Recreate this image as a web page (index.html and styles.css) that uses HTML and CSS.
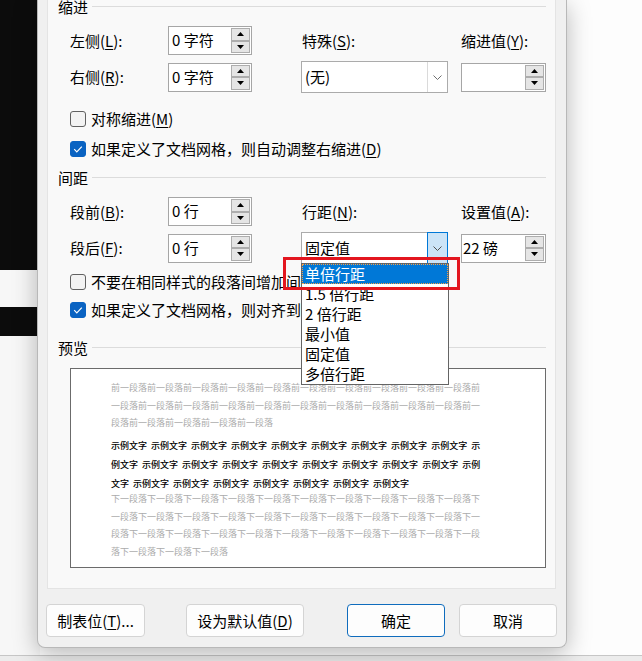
FILE: index.html
```html
<!DOCTYPE html>
<html lang="zh-CN">
<head>
<meta charset="utf-8">
<title>段落</title>
<link rel="stylesheet" href="styles.css">
</head>
<body>
<div class="desktop">
  <div class="dialog">
    <div class="panel">
      <div class="section-head"><span>缩进</span><i class="rule"></i></div>
      <div class="grid">
        <span class="lbl c1">左侧(<u>L</u>):</span>
        <div class="spinner c2"><span class="spin-val">0 字符</span><span class="spin-btns"><span class="sb"><svg width="7" height="4" viewBox="0 0 7 4"><path d="M0 4H7L3.5 0Z"/></svg></span><span class="sb"><svg width="7" height="4" viewBox="0 0 7 4"><path d="M0 0H7L3.5 4Z"/></svg></span></span></div>
        <span class="lbl c4 pl1">特殊(<u>S</u>):</span>
        <span class="lbl c6">缩进值(<u>Y</u>):</span>
        <span class="lbl c1">右侧(<u>R</u>):</span>
        <div class="spinner c2"><span class="spin-val">0 字符</span><span class="spin-btns"><span class="sb"><svg width="7" height="4" viewBox="0 0 7 4"><path d="M0 4H7L3.5 0Z"/></svg></span><span class="sb"><svg width="7" height="4" viewBox="0 0 7 4"><path d="M0 0H7L3.5 4Z"/></svg></span></span></div>
        <div class="select c4"><span class="sel-val">(无)</span><span class="sel-btn"><svg width="9" height="5" viewBox="0 0 9 5"><path d="M0.5 0.5L4.5 4.5L8.5 0.5" fill="none" stroke="#6f6f6f"/></svg></span></div>
        <div class="spinner c6"><span class="spin-val"></span><span class="spin-btns"><span class="sb"><svg width="7" height="4" viewBox="0 0 7 4"><path d="M0 4H7L3.5 0Z"/></svg></span><span class="sb"><svg width="7" height="4" viewBox="0 0 7 4"><path d="M0 0H7L3.5 4Z"/></svg></span></span></div>
      </div>
      <div class="check first"><span class="box"></span><span>对称缩进(<u>M</u>)</span></div>
      <div class="check"><span class="box on"><svg width="14" height="14" viewBox="0 0 14 14"><path d="M3.2 7.2L5.8 9.8L10.8 4.6" fill="none" stroke="#fff" stroke-width="1.2"/></svg></span><span>如果定义了文档网格，则自动调整右缩进(<u>D</u>)</span></div>

      <div class="section-head sh2"><span>间距</span><i class="rule"></i></div>
      <div class="grid">
        <span class="lbl c1">段前(<u>B</u>):</span>
        <div class="spinner c2"><span class="spin-val">0 行</span><span class="spin-btns"><span class="sb"><svg width="7" height="4" viewBox="0 0 7 4"><path d="M0 4H7L3.5 0Z"/></svg></span><span class="sb"><svg width="7" height="4" viewBox="0 0 7 4"><path d="M0 0H7L3.5 4Z"/></svg></span></span></div>
        <span class="lbl c4 pl1">行距(<u>N</u>):</span>
        <span class="lbl c6">设置值(<u>A</u>):</span>
        <span class="lbl c1">段后(<u>F</u>):</span>
        <div class="spinner c2"><span class="spin-val">0 行</span><span class="spin-btns"><span class="sb"><svg width="7" height="4" viewBox="0 0 7 4"><path d="M0 4H7L3.5 0Z"/></svg></span><span class="sb"><svg width="7" height="4" viewBox="0 0 7 4"><path d="M0 0H7L3.5 4Z"/></svg></span></span></div>
        <div class="select active c4"><span class="sel-val">固定值</span><span class="sel-btn"><svg width="9" height="5" viewBox="0 0 9 5"><path d="M0.5 0.5L4.5 4.5L8.5 0.5" fill="none" stroke="#505050"/></svg></span>
          <div class="dropdown">
            <div class="opt on">单倍行距</div>
            <div class="opt">1.5 倍行距</div>
            <div class="opt">2 倍行距</div>
            <div class="opt">最小值</div>
            <div class="opt">固定值</div>
            <div class="opt">多倍行距</div>
          </div>
          <div class="mark"></div>
        </div>
        <div class="spinner c6 tight"><span class="spin-val">22 磅</span><span class="spin-btns"><span class="sb"><svg width="7" height="4" viewBox="0 0 7 4"><path d="M0 4H7L3.5 0Z"/></svg></span><span class="sb"><svg width="7" height="4" viewBox="0 0 7 4"><path d="M0 0H7L3.5 4Z"/></svg></span></span></div>
      </div>
      <div class="check second"><span class="box"></span><span>不要在相同样式的段落间增加间距(<u>C</u>)</span></div>
      <div class="check second"><span class="box on"><svg width="14" height="14" viewBox="0 0 14 14"><path d="M3.2 7.2L5.8 9.8L10.8 4.6" fill="none" stroke="#fff" stroke-width="1.2"/></svg></span><span>如果定义了文档网格，则对齐到网格(<u>W</u>)</span></div>

      <div class="section-head sh3"><span>预览</span><i class="rule"></i></div>
      <div class="preview">
        <div class="pv-gray">
          <div>前一段落前一段落前一段落前一段落前一段落前一段落前一段落前一段落前一段落前一段落前</div>
          <div>一段落前一段落前一段落前一段落前一段落前一段落前一段落前一段落前一段落前一段落前一</div>
          <div>段落前一段落前一段落前一段落前一段落</div>
        </div>
        <div class="pv-sample">
          <div><span>示例文字</span><span>示例文字</span><span>示例文字</span><span>示例文字</span><span>示例文字</span><span>示例文字</span><span>示例文字</span><span>示例文字</span><span>示例文字</span><span>示</span></div>
          <div><span>例文字</span><span>示例文字</span><span>示例文字</span><span>示例文字</span><span>示例文字</span><span>示例文字</span><span>示例文字</span><span>示例文字</span><span>示例文字</span><span>示例</span></div>
          <div><span>文字</span><span>示例文字</span><span>示例文字</span><span>示例文字</span><span>示例文字</span><span>示例文字</span><span>示例文字</span><span>示例文字</span></div>
        </div>
        <div class="pv-gray pv-next">
          <div>下一段落下一段落下一段落下一段落下一段落下一段落下一段落下一段落下一段落下一段落下</div>
          <div>一段落下一段落下一段落下一段落下一段落下一段落下一段落下一段落下一段落下一段落下一</div>
          <div>段落下一段落下一段落下一段落下一段落下一段落下一段落下一段落下一段落下一段落下一段</div>
          <div>落下一段落下一段落下一段落</div>
        </div>
      </div>
    </div>
    <div class="buttons">
      <div class="btn b1">制表位(<u>T</u>)...</div>
      <div class="btn b2">设为默认值(<u>D</u>)</div>
      <div class="btn b3 default">确定</div>
      <div class="btn b4">取消</div>
    </div>
  </div>
</div>
</body>
</html>
```

FILE: styles.css
```css
* { box-sizing: border-box; }
html, body { margin: 0; padding: 0; }
body {
  width: 642px;
  height: 661px;
  overflow: hidden;
  font-family: "Noto Sans CJK SC", "Noto Sans", sans-serif;
  font-size: 15px;
  line-height: 20px;
  color: #000;
  background: #fff;
}
u { text-decoration: underline; text-underline-offset: 2px; }

.desktop {
  position: relative;
  width: 642px;
  height: 661px;
  background:
    linear-gradient(to bottom, transparent 655px, #c6c6c6 655px, #c6c6c6 656px, #ececec 656px),
    linear-gradient(to bottom, #0c0c0c 0, #0c0c0c 270px, #f7f7f7 270px, #f7f7f7 307px, #0c0c0c 307px, #0c0c0c 336px, #f7f7f7 336px) 0 0 / 40px 100% no-repeat,
    #fdfdfd;
}

.dialog {
  position: absolute;
  left: 37px;
  top: 0;
  width: 530px;
  height: 648px;
  background: #f0f0f0;
  border: 1px solid #b8b8b8;
  border-top: 0;
  border-radius: 0 0 8px 8px;
  box-shadow: 0 6px 24px rgba(0, 0, 0, 0.28);
  display: flex;
  flex-direction: column;
}

.panel {
  margin: 0 10px 0 9px;
  background: #f9f9f9;
  border: 1px solid #e4e4e4;
  border-top: 0;
  padding: 0 9px 20px 10px;
  display: flex;
  flex-direction: column;
}

.section-head {
  display: flex;
  align-items: center;
  gap: 4px;
  height: 20px;
  margin-top: -3px;
}
.section-head span { white-space: nowrap; }
.section-head .rule {
  flex: 1;
  height: 1px;
  background: #dcdcdc;
  margin-top: -2px;
}
.sh2 { margin-top: 4px; }
.sh3 { margin-top: 14px; }

.grid {
  display: grid;
  grid-template-columns: 98px 84px 49px 147px 13px 85px;
  grid-template-rows: 29px 32px;
  row-gap: 6px;
  margin: 9px 0 0 12px;
  align-items: center;
}
.c1 { grid-column: 1; }
.c2 { grid-column: 2; }
.c4 { grid-column: 4; }
.c6 { grid-column: 6; }
.lbl { white-space: nowrap; }
.pl1 { padding-left: 1px; }

.spinner {
  height: 29px;
  border: 1px solid #a6a6a6;
  background: #fff;
  display: flex;
}
.spin-val {
  flex: 1;
  padding-left: 3px;
  line-height: 26px;
  white-space: nowrap;
}
.tight .spin-val { padding-left: 1px; }
.spin-btns {
  width: 20px;
  display: flex;
  flex-direction: column;
  padding: 1px 1px 1px 0;
}
.sb {
  flex: 1;
  border: 1px solid #adadad;
  background: #e5e5e5;
  display: flex;
  align-items: center;
  justify-content: center;
}
.sb svg { display: block; fill: #000; }

.select {
  position: relative;
  height: 32px;
  border: 1px solid #ababab;
  background: #fff;
  display: flex;
}
.sel-val {
  flex: 1;
  padding-left: 3px;
  line-height: 30px;
  white-space: nowrap;
}
.sel-btn {
  width: 20px;
  border-left: 1px solid #dadada;
  display: flex;
  align-items: center;
  justify-content: center;
}
.sel-btn svg { display: block; }
.select.active .sel-btn {
  width: 21px;
  margin: -1px -1px -1px 0;
  background: #cce4f7;
  border: 1px solid #0078d7;
}

.dropdown {
  position: absolute;
  left: -1px;
  top: 30px;
  width: 148px;
  border: 1px solid #646464;
  background: #fff;
  z-index: 5;
}
.opt {
  height: 20px;
  line-height: 20px;
  padding-left: 3px;
  white-space: nowrap;
}
.opt.on {
  background: #0078d7;
  color: #fff;
  outline: 1px dotted #f5a048;
  outline-offset: -1px;
}
.mark {
  position: absolute;
  left: -19px;
  top: 24px;
  width: 177px;
  height: 33px;
  border: 3px solid #e3161f;
  z-index: 6;
}

.check {
  display: flex;
  align-items: center;
  gap: 5px;
  height: 30px;
  margin-left: 12px;
  white-space: nowrap;
}
.check.first { margin-top: 11px; }
.check.second { height: 28px; }
.grid + .check.second { margin-top: 4px; }
.box {
  width: 16px;
  height: 16px;
  flex: none;
  border: 1px solid #616161;
  border-radius: 3px;
  background: #f3f3f3;
  display: flex;
  align-items: center;
  justify-content: center;
}
.box.on {
  background: #0a63c2;
  border-color: #0a63c2;
}
.box svg { display: block; }

.preview {
  margin: 10px 0 0 12px;
  height: 200px;
  border: 1px solid #6b6b6b;
  background: #fff;
  padding: 10px 0 0 40px;
  font-size: 9px;
}
.pv-gray {
  color: #ababab;
  line-height: 17.5px;
  white-space: nowrap;
}
.pv-sample {
  margin-top: 4px;
  line-height: 19px;
  color: #000;
  font-weight: 500;
}
.pv-sample div {
  display: flex;
  gap: 4px;
  white-space: nowrap;
}
.pv-next { margin-top: -2.5px; }

.buttons {
  display: flex;
  padding: 15px 0 0 8px;
}
.btn {
  height: 33px;
  border: 1px solid #d4d4d4;
  border-radius: 4px;
  background: #fdfdfd;
  display: flex;
  align-items: center;
  justify-content: center;
  white-space: nowrap;
}
.btn.default { border-color: #0f6cbd; }
.b1 { width: 99px; }
.b2 { width: 118px; margin-left: 41px; }
.b3 { width: 98px; margin-left: 43px; }
.b4 { width: 98px; margin-left: 14px; }
```
